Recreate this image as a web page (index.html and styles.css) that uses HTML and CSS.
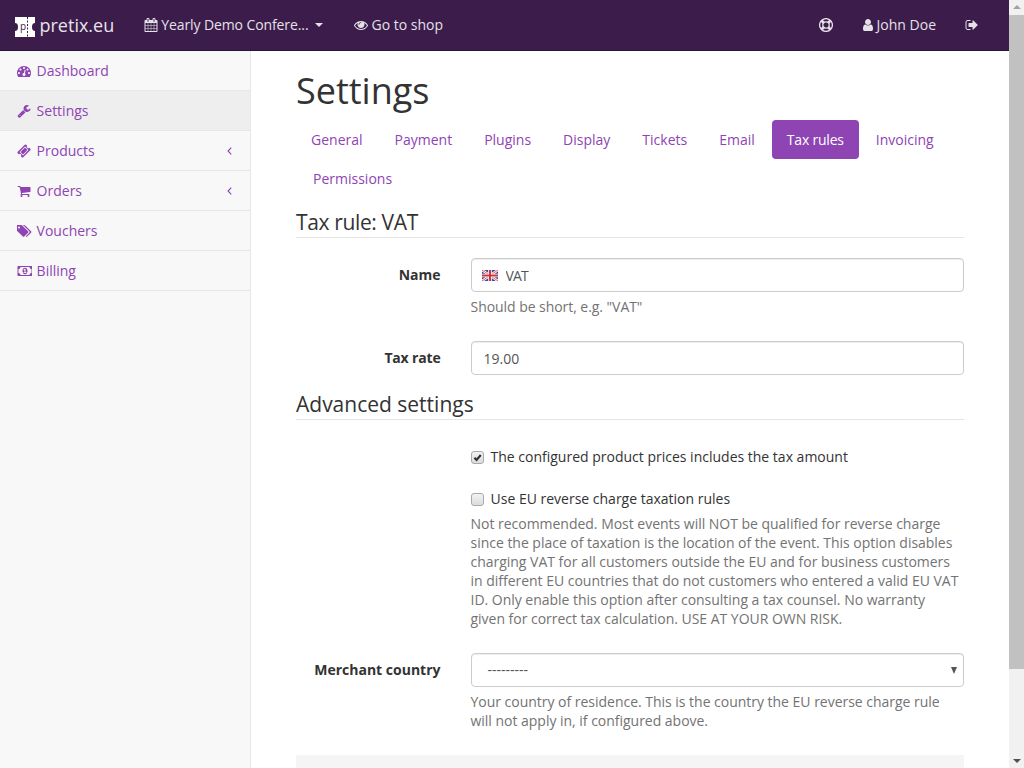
FILE: index.html
```html
<!DOCTYPE html>
<html lang="en">
<head>
<meta charset="utf-8">
<title>Settings</title>
<link rel="stylesheet" href="styles.css">
</head>
<body>
<div class="page">
  <div class="main">
    <header class="topbar">
      <a class="brand">
        <svg class="logo" viewBox="0 0 20 20"><path fill="#fff" d="M0 0h20v6a3 4 0 0 0 0 8v6H0v-6a3 4 0 0 0 0-8z"/><path d="M12.5 0v20" stroke="#3b1c4a" stroke-width="1" stroke-dasharray="2 1.5"/><text x="5" y="13" class="logo-p">p</text></svg>
        <span class="brand-name">pretix.eu</span>
      </a>
      <a class="top-link event">
        <svg class="fa" viewBox="0 0 1792 1792"><path d="M192 1664h288v-288h-288v288zm352 0h320v-288h-320v288zm-352-352h288v-320h-288v320zm352 0h320v-320h-320v320zm-352-384h288v-288h-288v288zm736 736h320v-288h-320v288zm-384-736h320v-288h-320v288zm768 736h288v-288h-288v288zm-384-352h320v-320h-320v320zm-352-864v-288q0-13-9.5-22.5t-22.5-9.5h-64q-13 0-22.5 9.5t-9.5 22.5v288q0 13 9.5 22.5t22.5 9.5h64q13 0 22.5-9.5t9.5-22.5zm736 864h288v-320h-288v320zm-384-384h320v-288h-320v288zm384 0h288v-288h-288v288zm32-480v-288q0-13-9.5-22.5t-22.5-9.5h-64q-13 0-22.5 9.5t-9.5 22.5v288q0 13 9.5 22.5t22.5 9.5h64q13 0 22.5-9.5t9.5-22.5zm384-64v1280q0 52-38 90t-90 38h-1408q-52 0-90-38t-38-90v-1280q0-52 38-90t90-38h128v-96q0-66 47-113t113-47h64q66 0 113 47t47 113v96h384v-96q0-66 47-113t113-47h64q66 0 113 47t47 113v96h128q52 0 90 38t38 90z"/></svg>
        <span class="event-name">Yearly Demo Confere...</span><i class="caret"></i>
      </a>
      <a class="top-link shop">
        <svg class="fa" viewBox="0 0 1792 1792"><path d="M1664 960q-152-236-381-353 61 104 61 225 0 185-131.5 316.5t-316.5 131.5-316.5-131.5-131.5-316.5q0-121 61-225-229 117-381 353 133 205 333.5 326.5t434.5 121.5 434.5-121.5 333.5-326.5zm-720-384q0-20-14-34t-34-14q-125 0-214.5 89.5t-89.5 214.5q0 20 14 34t34 14 34-14 14-34q0-86 61-147t147-61q20 0 34-14t14-34zm848 384q0 34-20 69-140 230-376.5 368.5t-499.5 138.5-499.5-139-376.5-368q-20-35-20-69t20-69q140-229 376.5-368t499.5-139 499.5 139 376.5 368q20 35 20 69z"/></svg>
        <span>Go to shop</span>
      </a>
      <div class="top-right">
        <a class="top-link help">
          <svg class="ring" viewBox="0 0 14 14"><circle cx="7" cy="7" r="6.4"/><circle cx="7" cy="7" r="3.2"/><path class="spoke" d="M4.7 4.7 2.5 2.5M9.3 4.7l2.2-2.2M4.7 9.3l-2.2 2.2M9.3 9.3l2.2 2.2"/></svg>
        </a>
        <a class="top-link user">
          <svg class="fa user-icon" viewBox="256 0 1280 1792"><path d="M1536 1399q0 109-62.5 187t-150.5 78h-854q-88 0-150.5-78t-62.5-187q0-85 8.5-160.5t31.5-152 58.5-131 94-89 134.5-34.5q131 128 313 128t313-128q76 0 134.5 34.5t94 89 58.5 131 31.5 152 8.5 160.5zm-256-887q0 159-112.5 271.5t-271.5 112.5-271.5-112.5-112.5-271.5 112.5-271.5 271.5-112.5 271.5 112.5 112.5 271.5z"/></svg>
          <span>John Doe</span>
        </a>
        <a class="top-link logout">
          <svg class="fa" viewBox="0 0 1792 1792"><path d="M704 1440q0 4 1 20t.5 26.5-3 23.5-10 19.5-20.5 6.5h-320q-119 0-203.5-84.5t-84.5-203.5v-704q0-119 84.5-203.5t203.5-84.5h320q13 0 22.5 9.5t9.5 22.5q0 4 1 20t.5 26.5-3 23.5-10 19.5-20.5 6.5h-320q-66 0-113 47t-47 113v704q0 66 47 113t113 47h312l11.5 1 11.5 3 8 5.5 7 9 2 13.5zm928-544q0 26-19 45l-544 544q-19 19-45 19t-45-19-19-45v-288h-448q-26 0-45-19t-19-45v-384q0-26 19-45t45-19h448v-288q0-26 19-45t45-19 45 19l544 544q19 19 19 45z"/></svg>
        </a>
      </div>
    </header>
    <div class="body-row">
      <nav class="sidebar">
        <a class="side-item">
          <span class="fw"><svg class="fa" viewBox="0 0 1792 1792"><path d="M384 1152q0-53-37.5-90.5t-90.5-37.5-90.5 37.5-37.5 90.5 37.5 90.5 90.5 37.5 90.5-37.5 37.5-90.5zm192-448q0-53-37.5-90.5t-90.5-37.5-90.5 37.5-37.5 90.5 37.5 90.5 90.5 37.5 90.5-37.5 37.5-90.5zm428 481l101-382q6-26-7.5-48.5t-38.5-29.5-48 6.5-30 39.5l-101 382q-60 5-107 43.5t-63 98.5q-20 77 20 146t117 89 146-20 89-117q16-60-6-117t-72-91zm660-33q0-53-37.5-90.5t-90.5-37.5-90.5 37.5-37.5 90.5 37.5 90.5 90.5 37.5 90.5-37.5 37.5-90.5zm-640-640q0-53-37.5-90.5t-90.5-37.5-90.5 37.5-37.5 90.5 37.5 90.5 90.5 37.5 90.5-37.5 37.5-90.5zm448 192q0-53-37.5-90.5t-90.5-37.5-90.5 37.5-37.5 90.5 37.5 90.5 90.5 37.5 90.5-37.5 37.5-90.5zm320 448q0 261-141 483-19 29-54 29h-1402q-35 0-54-29-141-221-141-483 0-182 71-348t191-286 286-191 348-71 348 71 286 191 191 286 71 348z"/></svg></span>
          <span>Dashboard</span>
        </a>
        <a class="side-item active">
          <span class="fw"><svg class="fa" viewBox="0 0 1792 1792"><path d="M448 1472q0-26-19-45t-45-19-45 19-19 45 19 45 45 19 45-19 19-45zm644-420l-682 682q-37 37-90 37-52 0-91-37l-106-108q-38-36-38-90 0-53 38-91l681-681q39 98 114.5 173.5t173.5 114.5zm634-435q0 39-23 106-47 134-164.5 217.5t-258.5 83.5q-185 0-316.5-131.5t-131.5-316.5 131.5-316.5 316.5-131.5q58 0 121.5 16.5t107.5 46.5q16 11 16 28t-16 28l-293 169v224l193 107q5-3 79-48.5t135.5-81 70.5-35.5q15 0 23.5 10t8.5 25z"/></svg></span>
          <span>Settings</span>
        </a>
        <a class="side-item">
          <span class="fw"><svg class="fa" viewBox="0 0 1792 1792"><path d="M1024 452l316 316-572 572-316-316zm-211 979l618-618q19-19 19-45t-19-45l-362-362q-18-18-45-18t-45 18l-618 618q-19 19-19 45t19 45l362 362q18 18 45 18t45-18zm889-637l-907 908q-37 37-90.5 37t-90.5-37l-126-126q56-56 56-136t-56-136-136-56-136 56l-125-126q-37-37-37-90.5t37-90.5l907-906q37-37 90.5-37t90.5 37l125 125q-56 56-56 136t56 136 136 56 136-56l126 125q37 37 37 90.5t-37 90.5z"/></svg></span>
          <span>Products</span>
          <svg class="chev" viewBox="0 0 5 8"><path d="M4.3.6 1 4l3.3 3.4"/></svg>
        </a>
        <a class="side-item">
          <span class="fw"><svg class="fa" viewBox="0 0 1792 1792"><path d="M704 1536q0 52-38 90t-90 38-90-38-38-90 38-90 90-38 90 38 38 90zm896 0q0 52-38 90t-90 38-90-38-38-90 38-90 90-38 90 38 38 90zm128-1088v512q0 24-16.5 42.5t-40.5 21.5l-1044 122q13 60 13 70 0 16-24 64h920q26 0 45 19t19 45-19 45-45 19h-1024q-26 0-45-19t-19-45q0-11 8-31.5t16-36 21.5-40 15.5-29.5l-177-823h-204q-26 0-45-19t-19-45 19-45 45-19h256q16 0 28.5 6.5t19.5 15.5 13 24.5 8 26 5.5 29.5 4.5 26h1201q26 0 45 19t19 45z"/></svg></span>
          <span>Orders</span>
          <svg class="chev" viewBox="0 0 5 8"><path d="M4.3.6 1 4l3.3 3.4"/></svg>
        </a>
        <a class="side-item">
          <span class="fw"><svg class="fa wide" viewBox="0 0 1920 1792"><path d="M384 448q0-53-37.5-90.5t-90.5-37.5-90.5 37.5-37.5 90.5 37.5 90.5 90.5 37.5 90.5-37.5 37.5-90.5zm1067 576q0 53-37 90l-491 492q-39 37-91 37-53 0-90-37l-715-716q-38-37-64.5-101t-26.5-117v-416q0-52 38-90t90-38h416q53 0 117 26.5t102 64.5l715 714q37 39 37 91zm384 0q0 53-37 90l-491 492q-39 37-91 37-36 0-59-14t-53-45l470-470q37-37 37-90 0-52-37-91l-715-714q-38-38-102-64.5t-117-26.5h224q53 0 117 26.5t102 64.5l715 714q37 39 37 91z"/></svg></span>
          <span>Vouchers</span>
        </a>
        <a class="side-item">
          <span class="fw"><svg class="fa wide" viewBox="0 0 1920 1792"><path d="M832 1152h384v-96h-128v-448h-114l-148 137 77 80q42-37 55-57h2v288h-128v96zm512-256q0 70-21 142t-59.5 134-101.5 101-138 39-138-39-101.5-101-59.5-134-21-142 21-142 59.5-134 101.5-101 138-39 138 39 101.5 101 59.5 134 21 142zm512 256v-512q-106 0-181-75t-75-181h-1152q0 106-75 181t-181 75v512q106 0 181 75t75 181h1152q0-106 75-181t181-75zm128-832v1152q0 26-19 45t-45 19h-1792q-26 0-45-19t-19-45v-1152q0-26 19-45t45-19h1792q26 0 45 19t19 45z"/></svg></span>
          <span>Billing</span>
        </a>
      </nav>
      <main class="content">
        <h1 class="title">Settings</h1>
        <ul class="pills">
          <li><a>General</a></li>
          <li><a>Payment</a></li>
          <li><a>Plugins</a></li>
          <li><a>Display</a></li>
          <li><a>Tickets</a></li>
          <li><a>Email</a></li>
          <li class="current"><a>Tax rules</a></li>
          <li><a>Invoicing</a></li>
          <li><a>Permissions</a></li>
        </ul>
        <form class="form">
          <h2 class="legend first">Tax rule: VAT</h2>
          <div class="row name-row">
            <label class="lab">Name</label>
            <div class="field">
              <div class="i18n">
                <input class="control flagged" type="text" value="VAT">
                <svg class="flag" viewBox="0 0 16 11"><rect width="16" height="11" rx="1" fill="#3c4a9c"/><path d="M0 0 16 11M16 0 0 11" stroke="#fff" stroke-width="2.4"/><path d="M0 0 16 11M16 0 0 11" stroke="#d0353f" stroke-width=".8"/><path d="M8 0v11M0 5.5h16" stroke="#fff" stroke-width="3.6"/><path d="M8 0v11M0 5.5h16" stroke="#d0353f" stroke-width="2"/></svg>
              </div>
              <p class="help-text">Should be short, e.g. "VAT"</p>
            </div>
          </div>
          <div class="row rate-row">
            <label class="lab">Tax rate</label>
            <div class="field"><input class="control" type="text" value="19.00"></div>
          </div>
          <h2 class="legend adv">Advanced settings</h2>
          <div class="row check-row">
            <div class="field">
              <label class="check"><span class="box on"><svg viewBox="0 0 12 12"><path d="M2.6 6.2 5 8.6 9.6 3.2"/></svg></span><span>The configured product prices includes the tax amount</span></label>
            </div>
          </div>
          <div class="row check-row second">
            <div class="field">
              <label class="check"><span class="box"></span>Use EU reverse charge taxation rules</label>
              <p class="help-text">Not recommended. Most events will NOT be qualified for reverse charge since the place of taxation is the location of the event. This option disables charging VAT for all customers outside the EU and for business customers in different EU countries that do not customers who entered a valid EU VAT ID. Only enable this option after consulting a tax counsel. No warranty given for correct tax calculation. USE AT YOUR OWN RISK.</p>
            </div>
          </div>
          <div class="row country-row">
            <label class="lab">Merchant country</label>
            <div class="field">
              <div class="select"><span>---------</span><i class="sel-arrow"></i></div>
              <p class="help-text">Your country of residence. This is the country the EU reverse charge rule will not apply in, if configured above.</p>
            </div>
          </div>
          <div class="actions"></div>
        </form>
      </main>
    </div>
  </div>
  <div class="scrollbar">
    <i class="sb-up"></i>
    <div class="sb-track"><div class="sb-thumb"></div></div>
    <i class="sb-down"></i>
  </div>
</div>
</body>
</html>
```
FILE: styles.css
```css
* { box-sizing: border-box; }
html, body { margin: 0; height: 768px; overflow: hidden; }
body { font-family: "Open Sans", sans-serif; font-size: 14px; line-height: 20px; color: #333; background: #fff; }
a { color: #8e44b3; text-decoration: none; }
.page { display: flex; height: 768px; overflow: hidden; }
.main { flex: 1; min-width: 0; display: flex; flex-direction: column; }
.fa { width: 14px; height: 14px; fill: currentColor; flex: none; display: block; }
.fa.wide { width: 15px; }
.fa.user-icon { width: 10px; }

.topbar { height: 51px; flex: none; display: flex; align-items: center; background: #3b1c4a; border-bottom: 1px solid #2a1335; color: #e6e0e9; padding-left: 15px; }
.brand { display: flex; align-items: center; color: #e8e3ea; }
.logo { width: 20px; height: 20px; display: block; margin-top: 3px; }
.logo-p { font-family: "Open Sans", sans-serif; font-size: 10px; font-weight: 400; fill: #3b1c4a; }
.brand-name { font-size: 18px; margin-left: 4.5px; }
.top-link { display: flex; align-items: center; color: #e6e0e9; gap: 3.6px; height: 50px; }
.event { margin-left: 30px; gap: 3px; }
.event-name { letter-spacing: -.1px; }
.caret { width: 0; height: 0; border-left: 4px solid transparent; border-right: 4px solid transparent; border-top: 4px solid currentColor; margin-left: 4px; }
.shop { margin-left: 30.5px; }
.top-right { margin-left: auto; display: flex; align-items: center; }
.ring { width: 14px; height: 14px; display: block; fill: none; stroke: currentColor; stroke-width: 1.3; }
.ring .spoke { stroke-width: 2.8; }
.user { margin-left: 30px; }
.logout { margin-left: 29px; margin-right: 30px; }

.body-row { flex: 1; min-height: 0; display: flex; }
.sidebar { width: 251px; flex: none; background: #f8f8f8; border-right: 1px solid #e7e7e7; }
.side-item { display: flex; align-items: center; height: 40px; padding: 0 15px; border-bottom: 1px solid #e7e7e7; }
.side-item.active { background: #eee; }
.fw { width: 18px; margin-right: 3.6px; display: flex; justify-content: center; flex: none; }
.chev { width: 5px; height: 8px; margin-left: auto; margin-right: 3px; fill: none; stroke: currentColor; stroke-width: 1.1; }

.content { flex: 1; min-width: 0; padding: 0 45px; }
.title { font-size: 36px; font-weight: 400; line-height: 40px; margin: 20px 0 9px; }
.pills { list-style: none; margin: 0 0 9px; padding: 0; display: flex; flex-wrap: wrap; }
.pills li + li { margin-left: 2px; }
.pills a { display: block; padding: 10px 15px 9px; border-radius: 4px; }
.pills .current a { background: #8e44b3; color: #fff; letter-spacing: -.2px; }

.legend { font-size: 21px; font-weight: 400; line-height: 30px; margin: 0 0 20px; border-bottom: 1px solid #e5e5e5; height: 31px; }
.legend.first { letter-spacing: -.36px; }
.row { display: grid; grid-template-columns: 144.5px 1fr; column-gap: 30px; }
.lab { font-weight: 700; text-align: right; padding-top: 7px; }
.rate-row .lab { letter-spacing: -.17px; }
.field { grid-column: 2; min-width: 0; }
.control { display: block; width: 100%; height: 34px; border: 1px solid #ccc; border-radius: 4px; padding: 6px 12px; font: inherit; color: #555; background: #fff; box-shadow: inset 0 1px 1px rgba(0,0,0,.075); outline: 0; }
.flagged { padding-left: 34px; letter-spacing: -.06em; }
.i18n { position: relative; }
.flag { position: absolute; left: 11px; top: 12px; width: 16px; height: 11px; }
.help-text { margin: 5px 0 0; color: #737373; letter-spacing: -.02px; }
.name-row .help-text { letter-spacing: -.05px; }
.name-row { margin-bottom: 24px; }
.rate-row { margin-bottom: 14px; }
.adv { margin-bottom: 27px; }
.check { display: flex; align-items: center; color: #333; height: 20px; }
.box { width: 13px; height: 13px; margin-right: 7px; border: 1px solid #a9a9a9; border-radius: 3px; background: linear-gradient(#f2f2f2, #dcdcdc); display: block; flex: none; }
.box svg { display: block; width: 11px; height: 11px; fill: none; stroke: #333; stroke-width: 2.4; }
.check-row { margin-bottom: 22px; }
.check-row.second { margin-bottom: 25px; }
.second .help-text { margin-top: 5px; line-height: 19px; padding-right: 4px; }
.select { display: flex; align-items: center; justify-content: space-between; height: 34px; border: 1px solid #ccc; border-radius: 4px; padding: 0 6px 0 16px; color: #555; box-shadow: inset 0 1px 1px rgba(0,0,0,.075); background: #fff; }
.sel-arrow { width: 0; height: 0; border-left: 3.5px solid transparent; border-right: 3.5px solid transparent; border-top: 7px solid #555; }
.country-row { margin-bottom: 25px; }
.country-row .help-text { line-height: 19px; }
.actions { height: 60px; background: #f5f5f5; }

.scrollbar { width: 15px; flex: none; background: #f1f1f1; display: flex; flex-direction: column; align-items: center; }
.sb-up, .sb-down { flex: none; width: 0; height: 0; border-left: 4px solid transparent; border-right: 4px solid transparent; margin: 5px 0; }
.sb-up { border-bottom: 4px solid #a3a3a3; }
.sb-down { border-top: 4px solid #505050; }
.sb-track { flex: 1; width: 100%; }
.sb-thumb { height: 654px; margin-top: 1px; background: #c1c1c1; }
```
